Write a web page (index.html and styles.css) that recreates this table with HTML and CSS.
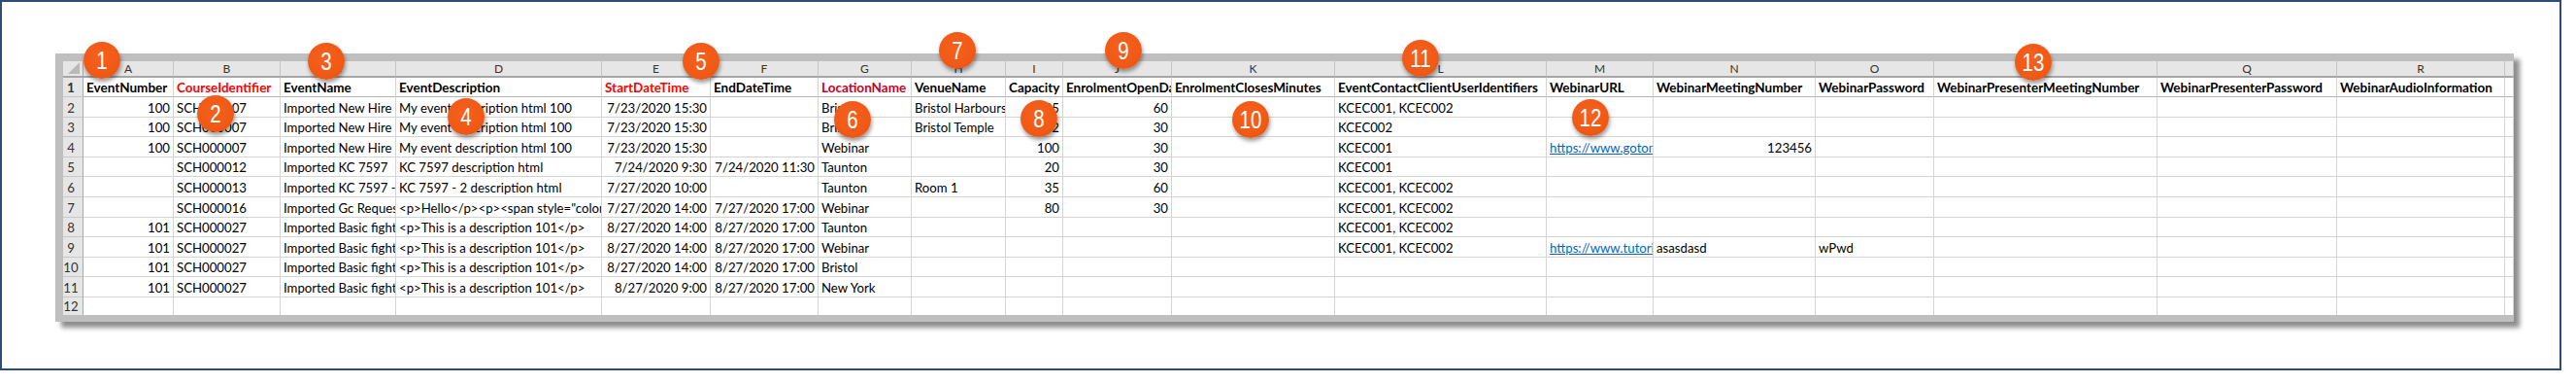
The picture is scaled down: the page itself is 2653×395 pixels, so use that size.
FILE: index.html
```html
<!DOCTYPE html>
<html lang="en">
<head>
<meta charset="utf-8">
<title>Event import spreadsheet</title>
<link rel="stylesheet" href="styles.css">
</head>
<body>
<div class="frame">
  <div class="sheet">
    <div class="row colhdr"><span class="corner"></span><span>A</span><span>B</span><span>C</span><span>D</span><span>E</span><span>F</span><span>G</span><span>H</span><span>I</span><span>J</span><span>K</span><span>L</span><span>M</span><span>N</span><span>O</span><span>P</span><span>Q</span><span>R</span><span></span></div>
    <div class="row hdr"><span class="rn">1</span><span>EventNumber</span><span class="red">CourseIdentifier</span><span>EventName</span><span>EventDescription</span><span class="red">StartDateTime</span><span>EndDateTime</span><span class="red2">LocationName</span><span>VenueName</span><span>Capacity</span><span>EnrolmentOpenDays</span><span>EnrolmentClosesMinutes</span><span>EventContactClientUserIdentifiers</span><span>WebinarURL</span><span>WebinarMeetingNumber</span><span>WebinarPassword</span><span>WebinarPresenterMeetingNumber</span><span>WebinarPresenterPassword</span><span>WebinarAudioInformation</span><span></span></div>
    <div class="row"><span class="rn">2</span><span class="n">100</span><span>SCH000007</span><span>Imported New Hire Induction</span><span>My event description html 100</span><span class="n">7/23/2020 15:30</span><span></span><span>Bristol</span><span>Bristol Harbourside</span><span class="n">25</span><span class="n">60</span><span></span><span>KCEC001, KCEC002</span><span></span><span></span><span></span><span></span><span></span><span></span><span></span></div>
    <div class="row"><span class="rn">3</span><span class="n">100</span><span>SCH000007</span><span>Imported New Hire Induction</span><span>My event description html 100</span><span class="n">7/23/2020 15:30</span><span></span><span>Bristol</span><span>Bristol Temple</span><span class="n">12</span><span class="n">30</span><span></span><span>KCEC002</span><span></span><span></span><span></span><span></span><span></span><span></span><span></span></div>
    <div class="row"><span class="rn">4</span><span class="n">100</span><span>SCH000007</span><span>Imported New Hire Induction</span><span>My event description html 100</span><span class="n">7/23/2020 15:30</span><span></span><span>Webinar</span><span></span><span class="n">100</span><span class="n">30</span><span></span><span>KCEC001</span><span class="lk">https://www.gotomeeting.com</span><span class="n">123456</span><span></span><span></span><span></span><span></span><span></span></div>
    <div class="row"><span class="rn">5</span><span></span><span>SCH000012</span><span>Imported KC 7597</span><span>KC 7597 description html</span><span class="n">7/24/2020 9:30</span><span class="n">7/24/2020 11:30</span><span>Taunton</span><span></span><span class="n">20</span><span class="n">30</span><span></span><span>KCEC001</span><span></span><span></span><span></span><span></span><span></span><span></span><span></span></div>
    <div class="row"><span class="rn">6</span><span></span><span>SCH000013</span><span>Imported KC 7597 - 2</span><span>KC 7597 - 2 description html</span><span class="n">7/27/2020 10:00</span><span></span><span>Taunton</span><span>Room 1</span><span class="n">35</span><span class="n">60</span><span></span><span>KCEC001, KCEC002</span><span></span><span></span><span></span><span></span><span></span><span></span><span></span></div>
    <div class="row"><span class="rn">7</span><span></span><span>SCH000016</span><span>Imported Gc Request</span><span>&lt;p&gt;Hello&lt;/p&gt;&lt;p&gt;&lt;span style="color:red"&gt;</span><span class="n">7/27/2020 14:00</span><span class="n">7/27/2020 17:00</span><span>Webinar</span><span></span><span class="n">80</span><span class="n">30</span><span></span><span>KCEC001, KCEC002</span><span></span><span></span><span></span><span></span><span></span><span></span><span></span></div>
    <div class="row"><span class="rn">8</span><span class="n">101</span><span>SCH000027</span><span>Imported Basic fight</span><span>&lt;p&gt;This is a description 101&lt;/p&gt;</span><span class="n">8/27/2020 14:00</span><span class="n">8/27/2020 17:00</span><span>Taunton</span><span></span><span></span><span></span><span></span><span>KCEC001, KCEC002</span><span></span><span></span><span></span><span></span><span></span><span></span><span></span></div>
    <div class="row"><span class="rn">9</span><span class="n">101</span><span>SCH000027</span><span>Imported Basic fight</span><span>&lt;p&gt;This is a description 101&lt;/p&gt;</span><span class="n">8/27/2020 14:00</span><span class="n">8/27/2020 17:00</span><span>Webinar</span><span></span><span></span><span></span><span></span><span>KCEC001, KCEC002</span><span class="lk">https://www.tutorialspoint.com</span><span>asasdasd</span><span>wPwd</span><span></span><span></span><span></span><span></span></div>
    <div class="row"><span class="rn">10</span><span class="n">101</span><span>SCH000027</span><span>Imported Basic fight</span><span>&lt;p&gt;This is a description 101&lt;/p&gt;</span><span class="n">8/27/2020 14:00</span><span class="n">8/27/2020 17:00</span><span>Bristol</span><span></span><span></span><span></span><span></span><span></span><span></span><span></span><span></span><span></span><span></span><span></span><span></span></div>
    <div class="row"><span class="rn">11</span><span class="n">101</span><span>SCH000027</span><span>Imported Basic fight</span><span>&lt;p&gt;This is a description 101&lt;/p&gt;</span><span class="n">8/27/2020 9:00</span><span class="n">8/27/2020 17:00</span><span>New York</span><span></span><span></span><span></span><span></span><span></span><span></span><span></span><span></span><span></span><span></span><span></span><span></span></div>
    <div class="row last"><span class="rn">12</span><span></span><span></span><span></span><span></span><span></span><span></span><span></span><span></span><span></span><span></span><span></span><span></span><span></span><span></span><span></span><span></span><span></span><span></span><span></span></div>
  </div>

  <div class="badge b1"><span>1</span></div>
  <div class="badge b2"><span>2</span></div>
  <div class="badge b3"><span>3</span></div>
  <div class="badge b4"><span>4</span></div>
  <div class="badge b5"><span>5</span></div>
  <div class="badge b6"><span>6</span></div>
  <div class="badge b7"><span>7</span></div>
  <div class="badge b8"><span>8</span></div>
  <div class="badge b9"><span>9</span></div>
  <div class="badge b10"><span>10</span></div>
  <div class="badge b11"><span>11</span></div>
  <div class="badge b12"><span>12</span></div>
  <div class="badge b13"><span>13</span></div>
</div>
</body>
</html>
```
FILE: styles.css
```css
* { box-sizing: border-box; margin: 0; padding: 0; }

body {
  background: #ffffff;
  width: 2653px;
  height: 395px;
  overflow: hidden;
}

.frame {
  position: relative;
  width: 2638px;
  height: 381px;
  border: 2px solid #2d4c7a;
  padding: 53px 0 0 55px;
  font-family: Lato, "Liberation Sans", sans-serif;
}

.sheet {
  width: 2532px;
  background: #ffffff;
  border-top: 8px solid #bfbfbf;
  border-left: 8px solid #bfbfbf;
  border-bottom: 7px solid #bfbfbf;
  box-shadow: 6px 6px 5px rgba(0, 0, 0, 0.45);
}

.row {
  display: grid;
  grid-template-columns: 21px 93px 110px 119px 212px 112px 111px 96px 97px 59px 112px 168px 218px 110px 167px 122px 230px 185px 173px 9px;
  height: 20.6px;
}

.row > span {
  display: flex;
  align-items: flex-end;
  overflow: hidden;
  white-space: nowrap;
  padding: 0 3px 1px 3px;
  border-right: 1px solid #d4d4d4;
  border-bottom: 1px solid #d4d4d4;
  font-size: 13.2px;
  line-height: 15px;
  color: #000000;
}

.row > span.n { justify-content: flex-end; }

.row > span.lk {
  color: #0563c1;
  text-decoration: underline;
}

.row > span.rn {
  justify-content: center;
  padding: 0 4px 1px 0;
  background: #e6e6e6;
  border-right: 1px solid #a9a9a9;
  border-bottom: 1px solid #c8c8c8;
  color: #333333;
}

.colhdr { height: 17px; }

.colhdr > span {
  align-items: center;
  justify-content: center;
  padding: 0;
  background: #e6e6e6;
  border-right: 1px solid #c4c4c4;
  border-bottom: 2px solid #a6a6a6;
  font-size: 12px;
  color: #333333;
}

.colhdr > span.corner {
  position: relative;
  border-right: 1px solid #a9a9a9;
}

.colhdr > span.corner::after {
  content: "";
  position: absolute;
  right: 3px;
  bottom: 2px;
  width: 12px;
  height: 12px;
  background: #b9b9b9;
  clip-path: polygon(100% 0, 100% 100%, 0 100%);
}

.row.hdr { height: 20px; }

.hdr > span {
  font-weight: 700;
  font-size: 13.5px;
  border-bottom-color: #b4b4b4;
}

.hdr > span.red { color: #ff0000; }
.hdr > span.red2 { color: #c8001e; }

.row.last { height: 18.4px; }
.row.last > span { border-bottom: 0; }

.badge {
  position: absolute;
  width: 38px;
  height: 38px;
  border-radius: 50%;
  background: radial-gradient(circle at 45% 40%, #f5611c 0%, #f05916 60%, #e4510f 100%);
  box-shadow: 1px 3px 4px rgba(0, 0, 0, 0.4);
  display: flex;
  align-items: center;
  justify-content: center;
  color: #ffffff;
  font-family: "Liberation Sans", Arial, sans-serif;
  font-size: 25px;
  line-height: 1;
}

.badge > span {
  display: inline-block;
  transform: scaleX(0.82);
}

.b1  { left: 84px;   top: 41px; }
.b2  { left: 201px;  top: 96px; }
.b3  { left: 315px;  top: 42px; }
.b4  { left: 459px;  top: 99px; }
.b5  { left: 701px;  top: 42px; }
.b6  { left: 857px;  top: 102px; }
.b7  { left: 965px;  top: 31px; }
.b8  { left: 1049px; top: 101px; }
.b9  { left: 1136px; top: 31px; }
.b10 { left: 1267px; top: 102px; }
.b11 { left: 1442px; top: 39px; }
.b12 { left: 1617px; top: 100px; }
.b13 { left: 2073px; top: 43px; }
```
